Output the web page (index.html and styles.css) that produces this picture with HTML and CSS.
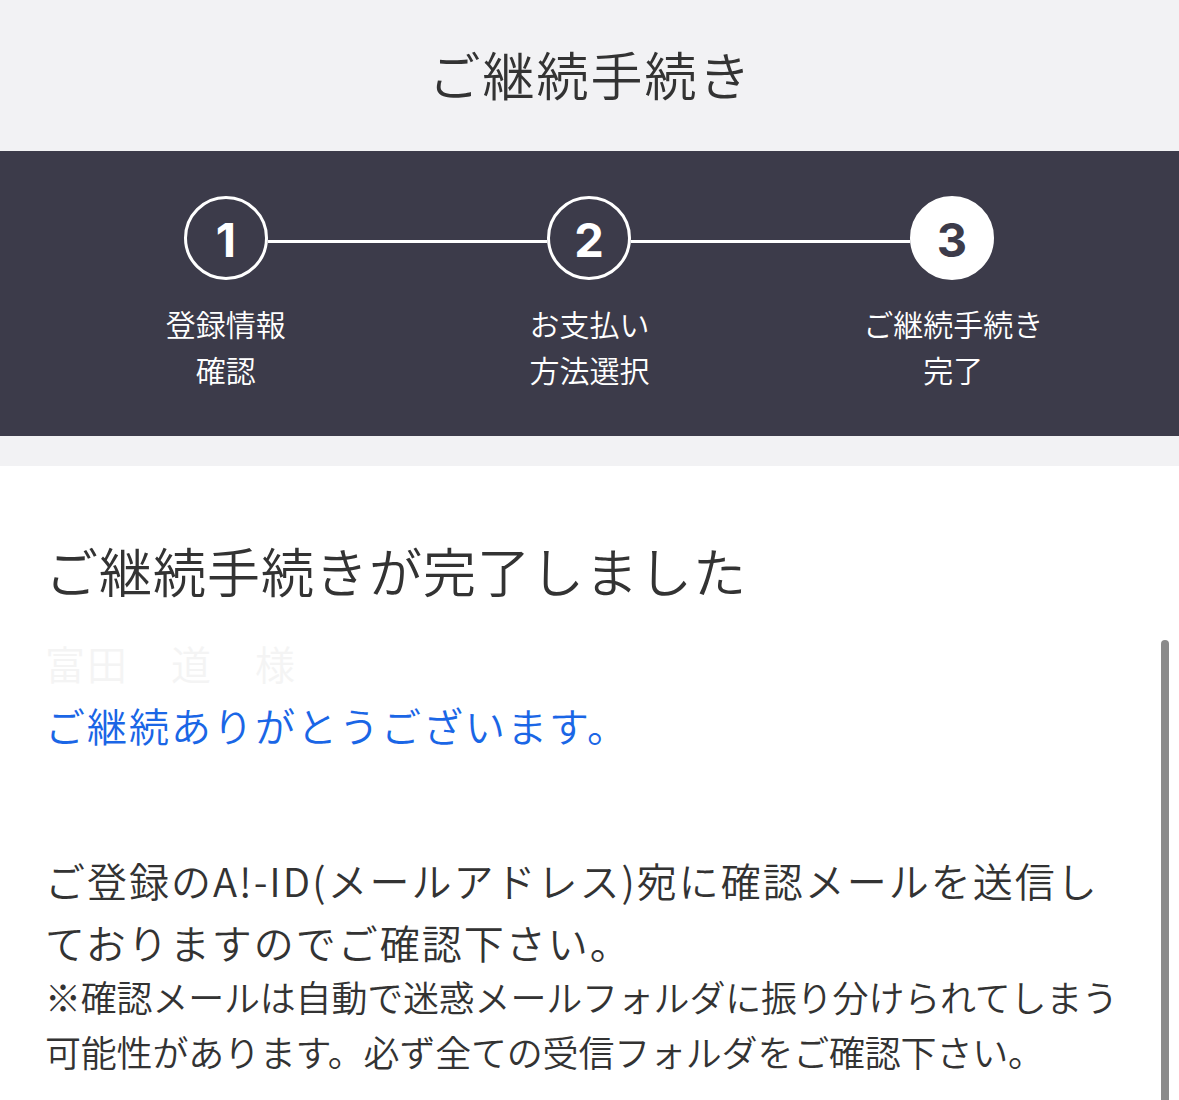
FILE: index.html
```html
<!DOCTYPE html>
<html lang="ja">
<head>
<meta charset="utf-8">
<title>ご継続手続き</title>
<link rel="stylesheet" href="styles.css">
</head>
<body>
<div class="page">
  <header class="title-bar">
    <h1 class="title">ご継続手続き</h1>
  </header>

  <section class="steps">
    <div class="track">
      <div class="circle">1</div>
      <div class="line"></div>
      <div class="circle">2</div>
      <div class="line"></div>
      <div class="circle circle-active">3</div>
    </div>
    <div class="labels">
      <div class="label">登録情報<br>確認</div>
      <div class="label">お支払い<br>方法選択</div>
      <div class="label">ご継続手続き<br>完了</div>
    </div>
  </section>

  <div class="spacer"></div>

  <main class="content">
    <h2 class="heading">ご継続手続きが完了しました</h2>
    <p class="name">富田　道　様</p>
    <p class="thanks">ご継続ありがとうございます。</p>
    <p class="body">ご登録のA!-ID(メールアドレス)宛に確認メールを送信し<br>ておりますのでご確認下さい。</p>
    <p class="note">※確認メールは自動で迷惑メールフォルダに振り分けられてしまう<br>可能性があります。必ず全ての受信フォルダをご確認下さい。</p>
  </main>

  <div class="scroll-indicator"></div>
</div>
</body>
</html>
```

FILE: styles.css
```css
* { box-sizing: border-box; }

html, body {
  margin: 0;
  padding: 0;
  background: #ffffff;
}

body {
  font-family: "Noto Sans CJK JP", "Noto Sans", sans-serif;
  font-weight: 350;
  color: #333333;
  overflow: hidden;
}

.page {
  position: relative;
  width: 1179px;
  height: 1100px;
  overflow: hidden;
}

.title-bar {
  height: 151px;
  background: #f2f2f4;
  display: flex;
  align-items: center;
  justify-content: center;
}

.title {
  margin: 0 0 0 2px;
  font-size: 52px;
  font-weight: 350;
  letter-spacing: 2px;
  line-height: 1;
  color: #333333;
  padding-bottom: 4px;
}

.steps {
  height: 285px;
  background: #3c3b4a;
  padding-top: 45px;
}

.track {
  display: flex;
  align-items: center;
  margin: 0 185px 0 184px;
  height: 84px;
}

.circle {
  width: 84px;
  height: 84px;
  flex: 0 0 84px;
  border: 3px solid #ffffff;
  border-radius: 50%;
  display: flex;
  align-items: center;
  justify-content: center;
  color: #ffffff;
  font-family: "Inter", "Noto Sans", sans-serif;
  font-weight: 700;
  font-size: 47px;
  line-height: 1;
  padding-top: 2px;
}

.circle-active {
  background: #ffffff;
  color: #3c3b4a;
}

.line {
  flex: 1;
  height: 3px;
  background: #ffffff;
  margin-top: 6px;
}

.labels {
  display: grid;
  grid-template-columns: repeat(3, 1fr);
  padding: 0 44px;
  margin-top: 20px;
}

.label {
  text-align: center;
  color: #ffffff;
  font-size: 30px;
  line-height: 46px;
}

.spacer {
  height: 30px;
  background: #f2f2f4;
}

.content {
  padding: 69px 40px 0 45px;
}

.heading {
  margin: 0;
  font-size: 53px;
  font-weight: 350;
  letter-spacing: 1px;
  line-height: 70px;
  color: #333333;
}

.name {
  margin: 27px 0 0 0;
  font-size: 40px;
  line-height: 62px;
  letter-spacing: 2px;
  color: #f4f4f4;
}

.thanks {
  margin: 0;
  font-size: 40px;
  line-height: 62px;
  letter-spacing: 2px;
  color: #1a66e6;
}

.body {
  margin: 93px 0 0 0;
  font-size: 40px;
  line-height: 62px;
  letter-spacing: 2px;
  color: #333333;
  white-space: nowrap;
}

.note {
  margin: -4px 0 0 0;
  font-size: 36px;
  line-height: 55px;
  letter-spacing: -0.2px;
  color: #333333;
  white-space: nowrap;
}

.scroll-indicator {
  position: absolute;
  right: 10px;
  top: 640px;
  bottom: -10px;
  width: 8px;
  border-radius: 4px;
  background: #8a8a8a;
}
```
